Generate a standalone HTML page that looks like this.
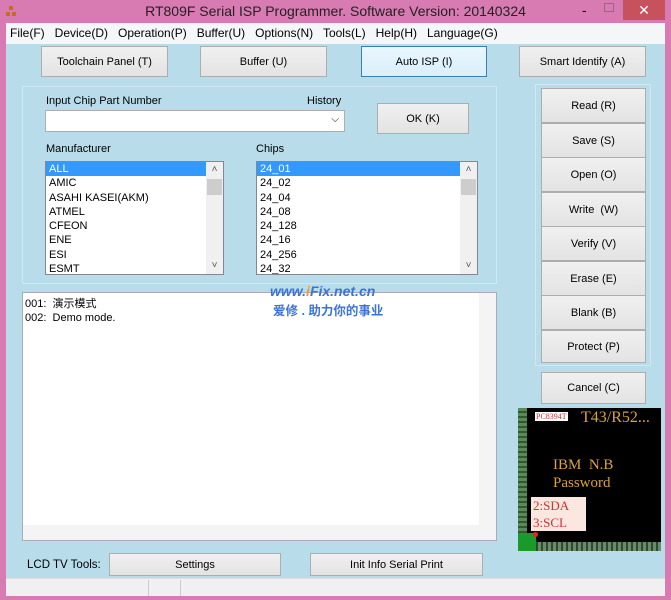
<!DOCTYPE html>
<html><head><meta charset="utf-8"><style>
*{box-sizing:border-box;margin:0;padding:0}
body{width:671px;height:600px;background:#d97bb3;font-family:"Liberation Sans","Noto Sans CJK SC",sans-serif;font-size:11px;color:#000;position:relative;overflow:hidden}
.a{position:absolute}
.btn{position:absolute;background:linear-gradient(#f0f0f0,#e3e3e3);border:1px solid #adadad;text-align:center;font-size:11px;display:flex;align-items:center;justify-content:center}
.list{position:absolute;background:#fff;border:1px solid #828790;overflow:hidden}
.list>div.r{height:14.3px;line-height:14px;padding-left:3px;font-size:11px}
.sel{background:#3399ff;color:#fff}
.sb{position:absolute;right:0;top:0;bottom:0;width:17px;background:#f0f0f0}
.ar{position:absolute;left:0;width:17px;height:16px;text-align:center;font-size:10px;line-height:16px;color:#555}
</style></head><body>
<div class="a" style="left:6px;top:6px;width:10px;height:10px"><div class="a" style="left:3px;top:0;width:4px;height:4px;background:#c46a2a"></div><div class="a" style="left:0;top:6px;width:4px;height:4px;background:#c46a2a"></div><div class="a" style="left:6px;top:6px;width:4px;height:4px;background:#c46a2a"></div></div>
<div class="a" style="left:0;top:3px;width:671px;text-align:center;font-size:14px;color:#222">RT809F Serial ISP Programmer. Software Version: 20140324</div>
<div class="a" style="left:582px;top:2px;font-size:14px">-</div>
<div class="a" style="left:604px;top:3px;width:10px;height:9px;border:1px solid #444;opacity:.4"></div>
<div class="a" style="left:623px;top:0;width:42px;height:20px;background:#c7525e;color:#fff;text-align:center;font-size:14px;line-height:20px">✕</div>
<div class="a" style="left:6px;top:23px;width:659px;height:21px;background:#f5f6f7;font-size:12px;line-height:21px;padding-left:4px">File(F)&nbsp;&nbsp; Device(D)&nbsp;&nbsp; Operation(P)&nbsp;&nbsp; Buffer(U)&nbsp;&nbsp; Options(N)&nbsp;&nbsp; Tools(L)&nbsp;&nbsp; Help(H)&nbsp;&nbsp; Language(G)</div>
<div class="a" style="left:6px;top:44px;width:659px;height:534px;background:#b8dce9"></div>
<div class="btn" style="left:41px;top:46px;width:127px;height:31px">Toolchain Panel (T)</div>
<div class="btn" style="left:200px;top:46px;width:127px;height:31px">Buffer (U)</div>
<div class="btn" style="left:361px;top:46px;width:126px;height:31px;border-color:#3c7fb1;background:linear-gradient(#eaf6fd,#d9effa)">Auto ISP (I)</div>
<div class="btn" style="left:519px;top:46px;width:127px;height:31px">Smart Identify (A)</div>
<div class="a" style="left:22px;top:86px;width:475px;height:198px;border:1px solid #d2e8f0"></div>
<div class="a" style="left:46px;top:95px">Input Chip Part Number</div>
<div class="a" style="left:307px;top:95px">History</div>
<div class="a" style="left:45px;top:110px;width:300px;height:22px;background:#fff;border:1px solid #adadad"><span class="a" style="right:5px;top:3px;font-size:10px">⌵</span></div>
<div class="btn" style="left:377px;top:103px;width:92px;height:31px">OK (K)</div>
<div class="a" style="left:46px;top:143px">Manufacturer</div>
<div class="a" style="left:256px;top:143px">Chips</div>
<div class="list" style="left:45px;top:161px;width:179px;height:114px"><div class="r sel" style="margin-right:17px">ALL</div><div class="r">AMIC</div><div class="r">ASAHI KASEI(AKM)</div><div class="r">ATMEL</div><div class="r">CFEON</div><div class="r">ENE</div><div class="r">ESI</div><div class="r">ESMT</div><div class="sb"><div class="ar" style="top:0">˄</div><div class="a" style="background:#cdcdcd;top:17px;left:1px;width:15px;height:16px"></div><div class="ar" style="bottom:0">˅</div></div></div>
<div class="list" style="left:256px;top:161px;width:222px;height:114px"><div class="r sel" style="margin-right:17px">24_01</div><div class="r">24_02</div><div class="r">24_04</div><div class="r">24_08</div><div class="r">24_128</div><div class="r">24_16</div><div class="r">24_256</div><div class="r">24_32</div><div class="sb"><div class="ar" style="top:0">˄</div><div class="a" style="background:#cdcdcd;top:17px;left:1px;width:15px;height:16px"></div><div class="ar" style="bottom:0">˅</div></div></div>
<div class="a" style="left:22px;top:292px;width:475px;height:249px;background:#fff;border:1px solid #aab"><div class="a" style="left:2px;top:4px;line-height:14px">001:&nbsp; 演示模式<br>002:&nbsp; Demo mode.</div><div class="a" style="right:0;top:0;width:17px;height:233px;background:#f4f4f4"></div><div class="a" style="left:0;bottom:0;width:473px;height:15px;background:#f4f4f4"></div></div>
<div class="a" style="left:270px;top:283px;color:#3b73d8;font-weight:bold;font-style:italic;font-size:14px">www.<span style="color:#f39c1a">i</span>Fix.net.cn</div>
<div class="a" style="left:273px;top:300px;color:#3b73d8;font-weight:bold;font-size:12.5px">爱修 . 助力你的事业</div>
<div class="a" style="left:535px;top:84px;width:116px;height:282px;border:1px solid #d2e8f0"></div>
<div class="btn" style="left:541px;top:88px;width:105px;height:35px">Read (R)</div>
<div class="btn" style="left:541px;top:123px;width:105px;height:35px">Save (S)</div>
<div class="btn" style="left:541px;top:157px;width:105px;height:35px">Open (O)</div>
<div class="btn" style="left:541px;top:192px;width:105px;height:35px">Write&nbsp; (W)</div>
<div class="btn" style="left:541px;top:226px;width:105px;height:35px">Verify (V)</div>
<div class="btn" style="left:541px;top:261px;width:105px;height:35px">Erase (E)</div>
<div class="btn" style="left:541px;top:295px;width:105px;height:35px">Blank (B)</div>
<div class="btn" style="left:541px;top:330px;width:105px;height:33px">Protect (P)</div>
<div class="btn" style="left:541px;top:372px;width:105px;height:32px">Cancel (C)</div>
<div class="a" style="left:518px;top:408px;width:143px;height:143px;background:#000;overflow:hidden;font-family:'Liberation Serif',serif">
<div class="a" style="left:0;top:0;width:9px;height:143px;background:repeating-linear-gradient(#5a8a5a 0 3px,#2e5a2e 3px 5px)"></div>
<div class="a" style="left:0;bottom:0;width:143px;height:9px;background:repeating-linear-gradient(90deg,#6a8a6a 0 3px,#2e4a2e 3px 5px)"></div>
<div class="a" style="left:0;bottom:0;width:18px;height:18px;background:#1a9a2a"></div>
<div class="a" style="left:17px;top:4px;background:#fff;color:#c33;font-size:8px;padding:0 1px">PC8394T</div>
<div class="a" style="left:63px;top:1px;color:#d9a23a;font-size:16px">T43/R52...</div>
<div class="a" style="left:35px;top:48px;color:#d9a23a;font-size:15px;line-height:18px">IBM&nbsp; N.B<br>Password</div>
<div class="a" style="left:13px;top:89px;width:55px;height:34px;background:#fbe6e0;color:#c33;font-size:13px;line-height:17px;padding-left:2px">2:SDA<br>3:SCL</div>
<div class="a" style="left:15px;top:124px;width:5px;height:5px;border-radius:50%;background:#e22"></div>
</div>
<div class="a" style="left:27px;top:559px;font-size:11.5px">LCD TV Tools:</div>
<div class="btn" style="left:109px;top:553px;width:172px;height:23px">Settings</div>
<div class="btn" style="left:310px;top:553px;width:173px;height:23px">Init Info Serial Print</div>
<div class="a" style="left:6px;top:578px;width:659px;height:18px;background:#f0f0f0;border-top:1px solid #ddd"></div>
<div class="a" style="left:148px;top:580px;width:33px;height:16px;border-left:1px solid #ccc;border-right:1px solid #ccc"></div>
</body></html>
